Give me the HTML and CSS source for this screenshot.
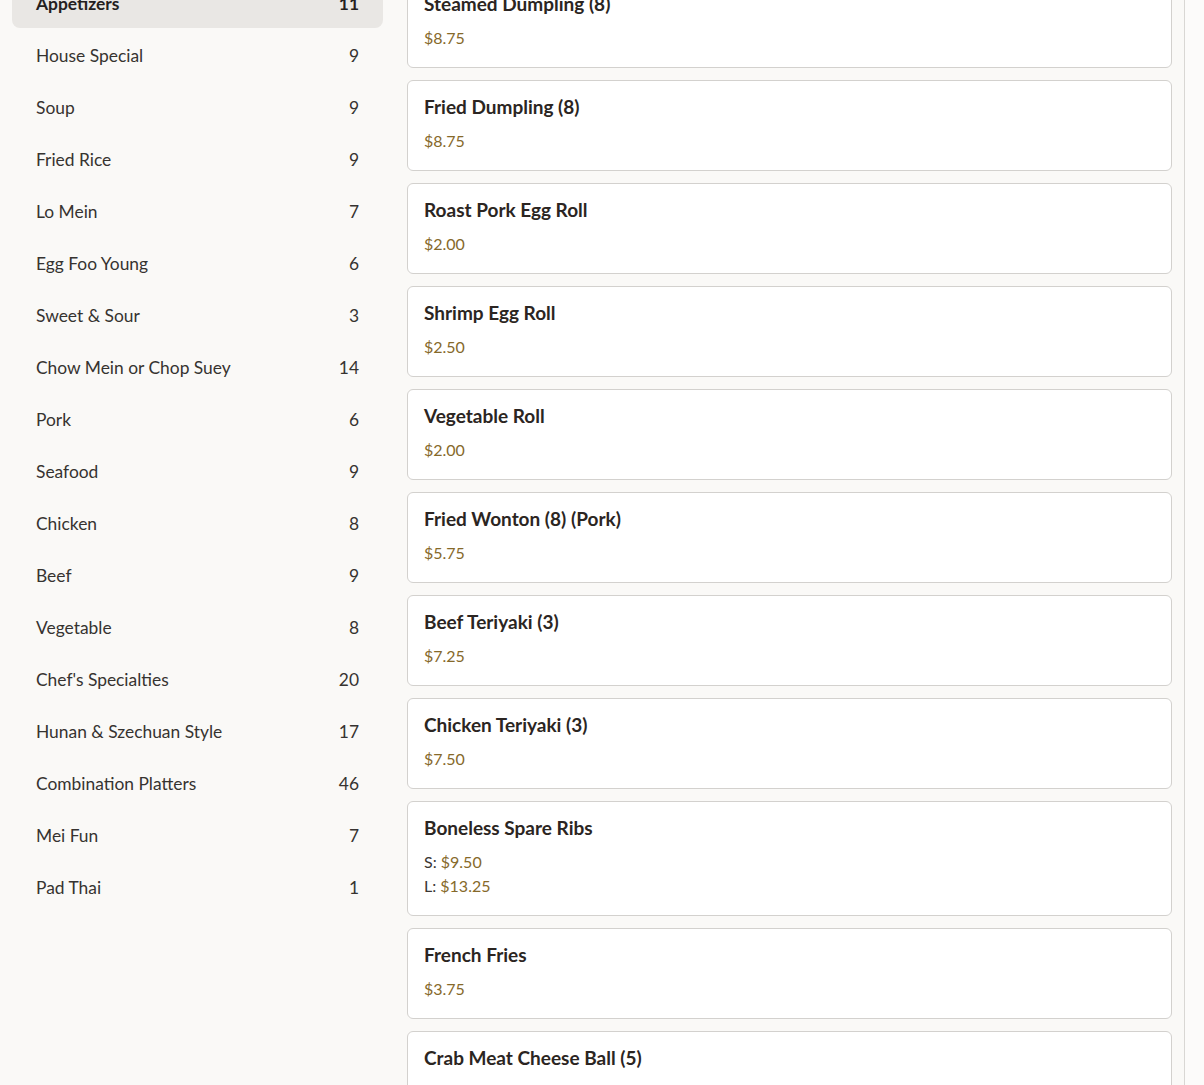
FILE: index.html
```html
<!DOCTYPE html>
<html lang="en">
<head>
<meta charset="utf-8">
<title>Menu</title>
<link rel="stylesheet" href="styles.css">
</head>
<body>
<div class="page">
  <div class="layout">
    <nav class="sidebar">
      <a class="cat active"><span>Appetizers</span><span class="count">11</span></a>
      <a class="cat"><span>House Special</span><span class="count">9</span></a>
      <a class="cat"><span>Soup</span><span class="count">9</span></a>
      <a class="cat"><span>Fried Rice</span><span class="count">9</span></a>
      <a class="cat"><span>Lo Mein</span><span class="count">7</span></a>
      <a class="cat"><span>Egg Foo Young</span><span class="count">6</span></a>
      <a class="cat"><span>Sweet &amp; Sour</span><span class="count">3</span></a>
      <a class="cat"><span>Chow Mein or Chop Suey</span><span class="count">14</span></a>
      <a class="cat"><span>Pork</span><span class="count">6</span></a>
      <a class="cat"><span>Seafood</span><span class="count">9</span></a>
      <a class="cat"><span>Chicken</span><span class="count">8</span></a>
      <a class="cat"><span>Beef</span><span class="count">9</span></a>
      <a class="cat"><span>Vegetable</span><span class="count">8</span></a>
      <a class="cat"><span>Chef's Specialties</span><span class="count">20</span></a>
      <a class="cat"><span>Hunan &amp; Szechuan Style</span><span class="count">17</span></a>
      <a class="cat"><span>Combination Platters</span><span class="count">46</span></a>
      <a class="cat"><span>Mei Fun</span><span class="count">7</span></a>
      <a class="cat"><span>Pad Thai</span><span class="count">1</span></a>
    </nav>
    <main class="items">
      <div class="card"><h3 class="name">Steamed Dumpling (8)</h3><div class="price">$8.75</div></div>
      <div class="card"><h3 class="name">Fried Dumpling (8)</h3><div class="price">$8.75</div></div>
      <div class="card"><h3 class="name">Roast Pork Egg Roll</h3><div class="price">$2.00</div></div>
      <div class="card"><h3 class="name">Shrimp Egg Roll</h3><div class="price">$2.50</div></div>
      <div class="card"><h3 class="name">Vegetable Roll</h3><div class="price">$2.00</div></div>
      <div class="card"><h3 class="name">Fried Wonton (8) (Pork)</h3><div class="price">$5.75</div></div>
      <div class="card"><h3 class="name">Beef Teriyaki (3)</h3><div class="price">$7.25</div></div>
      <div class="card"><h3 class="name">Chicken Teriyaki (3)</h3><div class="price">$7.50</div></div>
      <div class="card"><h3 class="name">Boneless Spare Ribs</h3><div class="price"><span class="size">S: </span>$9.50</div><div class="price"><span class="size">L: </span>$13.25</div></div>
      <div class="card"><h3 class="name">French Fries</h3><div class="price">$3.75</div></div>
      <div class="card"><h3 class="name">Crab Meat Cheese Ball (5)</h3><div class="price">$9.75</div></div>
    </main>
  </div>
  <div class="track"></div>
</div>
</body>
</html>
```
FILE: styles.css
```css
* { box-sizing: border-box; }
html, body {
  margin: 0;
  padding: 0;
  height: 100%;
  overflow: hidden;
}
body {
  background: #faf9f7;
  font-family: Lato, "Noto Sans", sans-serif;
  color: #2e2a27;
}
.page {
  display: flex;
  height: 100%;
}
.layout {
  flex: 1;
  display: flex;
  gap: 24px;
  padding: 0 12px;
  margin-top: -24px;
}
.sidebar {
  width: 371px;
  flex: none;
  display: flex;
  flex-direction: column;
}
.cat {
  display: flex;
  justify-content: space-between;
  align-items: center;
  height: 52px;
  padding: 3px 24px 0;
  font-size: 17.4px;
  color: #363330;
  border-radius: 8px;
}
.cat.active {
  background: #e9e7e4;
  font-weight: 700;
  color: #24201d;
}
.items {
  flex: 1;
  display: flex;
  flex-direction: column;
  gap: 12px;
  padding-top: 1px;
}
.card {
  background: #fff;
  border: 1px solid #d3d1ce;
  border-radius: 6px;
  padding: 16px 16px 17px;
}
.name {
  margin: 0 0 12px;
  font-size: 19px;
  line-height: 20px;
  font-weight: 700;
  color: #2b2522;
}
.price {
  font-size: 16px;
  line-height: 24px;
  color: #86692a;
}
.size { color: #3a3633; }
.track {
  width: 20px;
  flex: none;
  border-left: 1px solid #d9d7d4;
  background: #fcfbfa;
}
```
